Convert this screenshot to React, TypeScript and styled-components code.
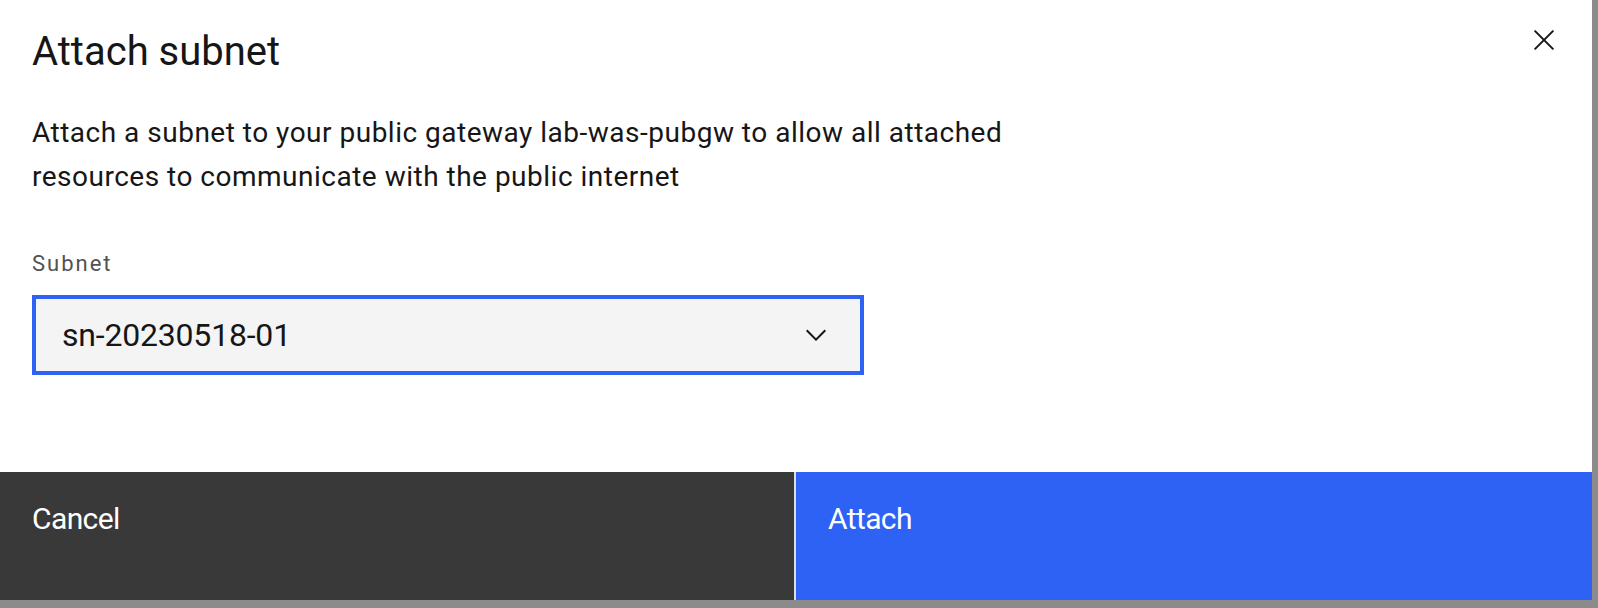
import React from "react";
import styled, { createGlobalStyle } from "styled-components";

const GlobalStyle = createGlobalStyle`
  html, body {
    margin: 0;
    padding: 0;
    background: #8b8b8b;
  }

  body {
    font-family: Roboto, "Noto Sans", "Liberation Sans", sans-serif;
    color: #161616;
  }
`;

const Modal = styled.div`
  width: 1592px;
  height: 600px;
  background: #ffffff;
  display: flex;
  flex-direction: column;
`;

const Header = styled.div`
  display: flex;
  justify-content: space-between;
  align-items: flex-start;
  padding: 26px 28px 0 32px;
`;

const Title = styled.h2`
  margin: 0;
  font-size: 40px;
  line-height: 52px;
  font-weight: 400;
`;

const CloseButton = styled.button`
  width: 40px;
  height: 40px;
  margin-top: -6px;
  padding: 0;
  border: none;
  background: transparent;
  display: flex;
  align-items: center;
  justify-content: center;
  cursor: pointer;
  color: #161616;
`;

const Content = styled.div`
  flex: 1;
  padding: 33px 32px 0 32px;
`;

const Description = styled.p`
  margin: 0;
  max-width: 1040px;
  font-size: 28px;
  line-height: 44px;
  font-weight: 400;
  letter-spacing: 0.5px;
`;

const Field = styled.div`
  margin-top: 53px;
  display: flex;
  flex-direction: column;
  gap: 19px;
`;

const Label = styled.label`
  font-size: 22px;
  line-height: 24px;
  color: #525252;
  letter-spacing: 2px;
`;

const SelectBox = styled.div`
  box-sizing: border-box;
  width: 832px;
  height: 80px;
  background: #f4f4f4;
  border: 4px solid #2d62f5;
  display: flex;
  align-items: center;
  justify-content: space-between;
  padding: 0 28px 0 26px;
`;

const SelectValue = styled.span`
  font-size: 32px;
  line-height: 32px;
  color: #161616;
  letter-spacing: -0.2px;
`;

const Footer = styled.div`
  display: grid;
  grid-template-columns: 794px 1fr;
  gap: 2px;
  height: 128px;
  background: #dcdcdc;
`;

const FooterButton = styled.button<{ $primary?: boolean }>`
  border: none;
  margin: 0;
  text-align: left;
  padding: 27px 32px 0 32px;
  display: flex;
  align-items: flex-start;
  font-family: inherit;
  font-size: 30px;
  line-height: 40px;
  font-weight: 400;
  letter-spacing: -0.6px;
  color: #ffffff;
  background: ${({ $primary }) => ($primary ? "#2d62f5" : "#393939")};
  cursor: pointer;
`;

const CloseIcon = () => (
  <svg width="40" height="40" viewBox="0 0 32 32" fill="none" stroke="currentColor" strokeWidth="1.6">
    <path d="M8.5 8.5L23.5 23.5M23.5 8.5L8.5 23.5" />
  </svg>
);

const ChevronDown = () => (
  <svg width="32" height="32" viewBox="0 0 16 16" fill="#161616">
    <path d="M8 11L3 6 3.7 5.3 8 9.6 12.3 5.3 13 6z" />
  </svg>
);

const App: React.FC = () => {
  return (
    <>
      <GlobalStyle />
      <Modal>
        <Header>
          <Title>Attach subnet</Title>
          <CloseButton aria-label="Close">
            <CloseIcon />
          </CloseButton>
        </Header>
        <Content>
          <Description>
            Attach a subnet to your public gateway lab-was-pubgw to allow all attached
            resources to communicate with the public internet
          </Description>
          <Field>
            <Label>Subnet</Label>
            <SelectBox>
              <SelectValue>sn-20230518-01</SelectValue>
              <ChevronDown />
            </SelectBox>
          </Field>
        </Content>
        <Footer>
          <FooterButton>Cancel</FooterButton>
          <FooterButton $primary>Attach</FooterButton>
        </Footer>
      </Modal>
    </>
  );
};

export default App;
